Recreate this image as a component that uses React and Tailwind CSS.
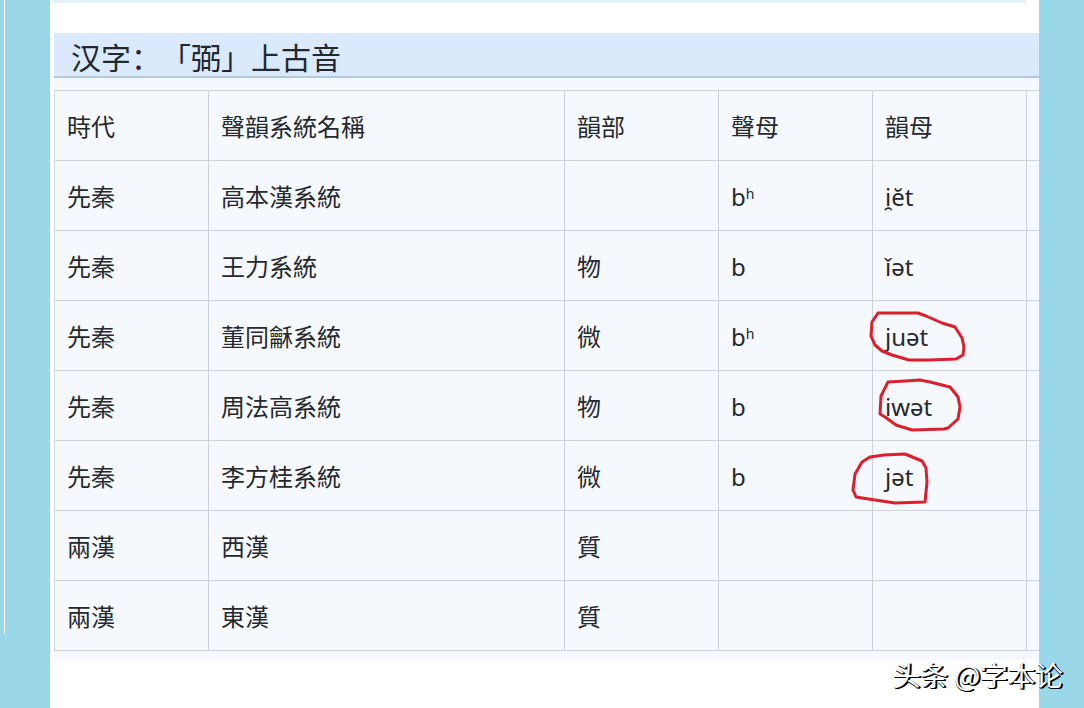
const rows = [
  ["先秦", "高本漢系統", "", "bʰ", "i̯ĕt"],
  ["先秦", "王力系統", "物", "b", "ǐət"],
  ["先秦", "董同龢系統", "微", "bʰ", "juət"],
  ["先秦", "周法高系統", "物", "b", "iwət"],
  ["先秦", "李方桂系統", "微", "b", "jət"],
  ["兩漢", "西漢", "質", "", ""],
  ["兩漢", "東漢", "質", "", ""],
];
const head = ["時代", "聲韻系統名稱", "韻部", "聲母", "韻母"];
const widths = ["w-[154px]", "w-[356px]", "w-[154px]", "w-[154px]", "w-[154px]", "w-[154px]"];

function Cell({ children, i }) {
  return (
    <td className={`${widths[i]} h-[70px] border border-[#ccd2d8] pl-[12px] pr-0 pt-[2px] align-middle whitespace-nowrap`}>
      {children}
    </td>
  );
}

export default function App() {
  return (
    <div
      className="relative flex h-[708px] w-[1084px] overflow-hidden bg-[#9ad8e9] text-[24px] text-[#26292d]"
      style={{ fontFamily: '"Noto Sans", "Noto Sans CJK TC", sans-serif' }}
    >
      <div className="absolute left-[4px] top-0 h-[634px] w-px bg-white" />
      <div className="ml-[50px] flex h-full w-[989px] flex-col bg-white">
        <div className="ml-[2px] h-[3px] w-[974px] bg-[#e6f0fc]" />
        <div className="mt-[30px] ml-[4px] flex h-[45px] items-center border-b-2 border-[#b4c8e0] bg-[#daeafc] pl-[17px] text-[30px] leading-none text-[#23282d]">
          <span
            className="mt-[3px] [text-spacing-trim:space-all]"
            lang="zh-CN"
            style={{ fontFamily: '"Noto Sans CJK SC", sans-serif' }}
          >
            汉字：「弼」上古音
          </span>
        </div>
        <div className="ml-[4px] h-[582px] overflow-hidden bg-[#f5f8fc] pt-[12px]">
          <table className="w-[1126px] table-fixed border-collapse leading-none">
            <tbody>
              <tr>
                {head.map((t, i) => (
                  <Cell key={i} i={i}>{t}</Cell>
                ))}
                <Cell i={5} />
              </tr>
              {rows.map((r, ri) => (
                <tr key={ri}>
                  {r.map((t, i) => (
                    <Cell key={i} i={i}>
                      {t === "bʰ" ? (
                        <span>b<span className="relative top-[-7px] text-[14px]">h</span></span>
                      ) : t}
                    </Cell>
                  ))}
                  <Cell i={5} />
                </tr>
              ))}
            </tbody>
          </table>
        </div>
      </div>
      <svg className="absolute left-0 top-0" width="1084" height="708" fill="none" stroke="#dc1f2c" strokeWidth="3" strokeLinecap="round" strokeLinejoin="round">
        <path d="M878 313 L900 313 L918 313 L926 316 L942 323 L955 327 L962 338 L964 347 L963 355 L956 359 L930 360 L909 360 L892 355 L882 351 L875 345 L871 336 L872 322 L878 313" />
        <path d="M888 382 L905 381 L920 380 L930 382 L950 387 L958 397 L960 407 L958 419 L948 428 L944 429 L912 430 L896 425 L885 417 L880 414 L881 396 L888 382" />
        <path d="M870 457 L884 455 L905 454 L922 461 L926 468 L927 482 L925 502 L895 503 L875 500 L856 497 L853 490 L855 474 L862 462 L870 457" />
      </svg>
      <div
        className="absolute left-[893px] top-[658px] whitespace-nowrap text-[27.5px] leading-[32px] text-white"
        lang="zh-CN"
        style={{
          fontFamily: '"Noto Sans CJK SC", sans-serif',
          textShadow: "1px 1px 0 #000, 2px 1px 0 #000, 0 1px 0 #000",
        }}
      >
        头条 @字本论
      </div>
    </div>
  );
}
